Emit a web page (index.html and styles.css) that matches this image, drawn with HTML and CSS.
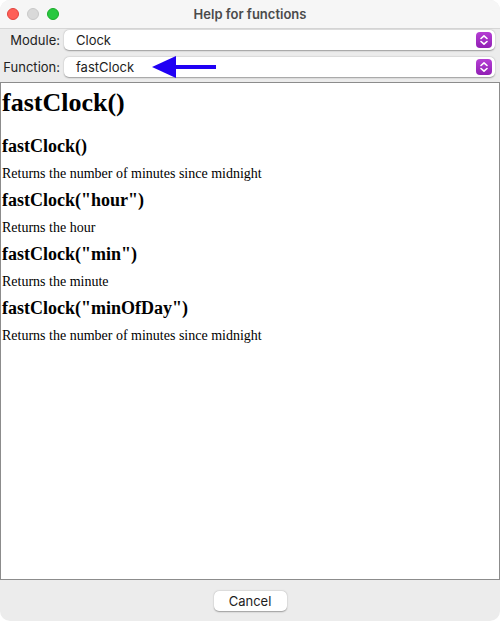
FILE: index.html
```html
<!DOCTYPE html>
<html>
<head>
<meta charset="utf-8">
<link rel="stylesheet" href="styles.css">
</head>
<body>
<div class="window">
  <div class="titlebar">
    <div class="lights">
      <span class="light red"></span>
      <span class="light gray"></span>
      <span class="light green"></span>
    </div>
    <div class="title">Help for functions</div>
  </div>
  <div class="form">
    <div class="row">
      <label class="label">Module:</label>
      <div class="select">
        <span class="value">Clock</span>
        <span class="stepper"><svg width="16" height="16" viewBox="0 0 16 16"><path d="M5 6.5 L8 3.8 L11 6.5 M5 9.5 L8 12.2 L11 9.5" fill="none" stroke="#fff" stroke-width="1.6" stroke-linecap="round" stroke-linejoin="round"/></svg></span>
      </div>
    </div>
    <div class="row">
      <label class="label">Function:</label>
      <div class="select">
        <span class="value">fastClock</span>
        <span class="stepper"><svg width="16" height="16" viewBox="0 0 16 16"><path d="M5 6.5 L8 3.8 L11 6.5 M5 9.5 L8 12.2 L11 9.5" fill="none" stroke="#fff" stroke-width="1.6" stroke-linecap="round" stroke-linejoin="round"/></svg></span>
        <svg class="arrow" width="70" height="26" viewBox="0 0 70 26"><polygon points="0,12 24,1 24,23" fill="#2000f4"/><rect x="22" y="10" width="42" height="4" fill="#2000f4"/></svg>
      </div>
    </div>
  </div>
  <div class="content">
    <h1>fastClock()</h1>
    <h3>fastClock()</h3>
    <p>Returns the number of minutes since midnight</p>
    <h3>fastClock("hour")</h3>
    <p>Returns the hour</p>
    <h3>fastClock("min")</h3>
    <p>Returns the minute</p>
    <h3>fastClock("minOfDay")</h3>
    <p>Returns the number of minutes since midnight</p>
  </div>
  <div class="footer">
    <button class="btn">Cancel</button>
  </div>
</div>
</body>
</html>
```
FILE: styles.css
```css
html, body {
  margin: 0;
  padding: 0;
  background: #ffffff;
}
.window {
  width: 500px;
  height: 621px;
  background: #ececec;
  border-radius: 10px;
  overflow: hidden;
  display: flex;
  flex-direction: column;
  font-family: Inter, "Liberation Sans", Arial, sans-serif;
}
.titlebar {
  height: 28px;
  flex: none;
  background: #f6f6f6;
  border-bottom: 1px solid #d6d6d6;
  position: relative;
  display: flex;
  align-items: center;
  justify-content: center;
}
.lights {
  position: absolute;
  left: 7px;
  top: 8px;
  display: flex;
  gap: 8px;
}
.light {
  width: 12px;
  height: 12px;
  border-radius: 50%;
  box-sizing: border-box;
}
.red { background: #fe5f57; border: 0.5px solid #e0443e; }
.gray { background: #d9d9d9; border: 0.5px solid #c8c8c8; }
.green { background: #28c840; border: 0.5px solid #1aab29; }
.title {
  font-size: 13px;
  font-weight: 600;
  color: #4b4b4b;
}
.form {
  flex: none;
  padding: 1px 5px 5px 0;
  display: flex;
  flex-direction: column;
  gap: 7px;
}
.row {
  display: flex;
  align-items: center;
  height: 20px;
}
.label {
  width: 60px;
  text-align: right;
  font-size: 13px;
  color: #222;
  margin-right: 4px;
}
.select {
  flex: 1;
  height: 20px;
  background: #fff;
  border-radius: 5px;
  box-shadow: 0 0.5px 1.5px rgba(0,0,0,0.35);
  display: flex;
  align-items: center;
  position: relative;
}
.value {
  flex: 1;
  padding-left: 12px;
  font-size: 13px;
  color: #1d1d1d;
}
.stepper {
  width: 16px;
  height: 16px;
  border-radius: 4px;
  background: linear-gradient(#b53ed4, #9120b4);
  margin-right: 3px;
  display: flex;
}
.arrow {
  position: absolute;
  left: 88px;
  top: -2px;
}
.content {
  flex: none;
  height: 496px;
  background: #fff;
  border: 1px solid #8c8c8c;
  padding: 0 1px;
  font-family: "Liberation Serif", "Times New Roman", serif;
  color: #000;
}
.content h1 {
  margin: 0;
  font-size: 26px;
  line-height: 40px;
  font-weight: bold;
}
.content h3 {
  margin: 0;
  font-size: 18px;
  line-height: 27px;
  font-weight: bold;
}
.content h1 + h3 {
  margin-top: 10px;
}
.content p {
  margin: 0;
  font-size: 14px;
  line-height: 27px;
}
.footer {
  flex: 1;
  display: flex;
  align-items: center;
  justify-content: center;
}
.btn {
  width: 73px;
  height: 20px;
  border: none;
  border-radius: 5px;
  background: #fff;
  box-shadow: 0 0.5px 1.5px rgba(0,0,0,0.35);
  font-family: Inter, "Liberation Sans", Arial, sans-serif;
  font-size: 13px;
  color: #1d1d1d;
  padding: 0;
}
```
